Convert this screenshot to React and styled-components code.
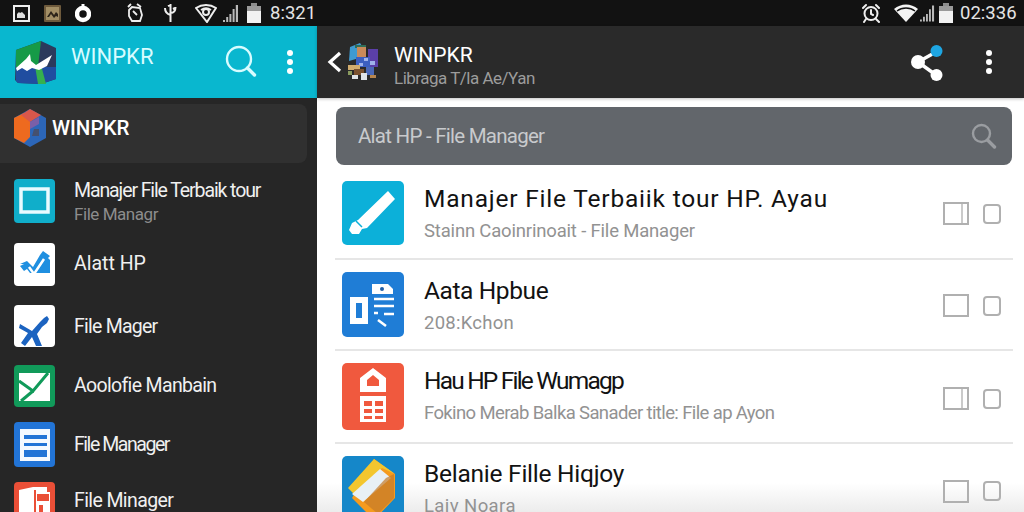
import React from "react";
import styled, { createGlobalStyle } from "styled-components";

const Global = createGlobalStyle`
  html, body { margin: 0; padding: 0; background: #fff; }
  body { font-family: Roboto, "Liberation Sans", sans-serif; }
  #root { width: 1024px; height: 512px; overflow: hidden; }
`;

const Page = styled.div`
  width: 1024px;
  height: 512px;
  overflow: hidden;
  display: flex;
  flex-direction: column;
  background: #fff;
`;

const StatusBar = styled.div`
  height: 26px;
  flex: none;
  background: #121212;
  display: flex;
  align-items: center;
  color: #e4e4e4;
`;
const StatusIcon = styled.svg`
  flex: none;
  display: block;
  margin-left: ${(p) => p.$ml}px;
`;
const Clock = styled.span`
  font-size: ${(p) => p.$size}px;
  line-height: 26px;
  margin-left: ${(p) => p.$ml}px;
  white-space: nowrap;
`;

const Panes = styled.div`
  flex: 1;
  min-height: 0;
  display: flex;
`;

const Sidebar = styled.aside`
  width: 317px;
  flex: none;
  background: #262626;
  display: flex;
  flex-direction: column;
`;
const SideHeader = styled.header`
  height: 72px;
  flex: none;
  background: #09b7cf;
  display: flex;
  align-items: center;
  color: #d8fcff;
`;
const SideBrand = styled.div`
  font-size: 22px;
  line-height: 26px;
  margin: -11px 0 0 15px;
  width: 126px;
`;
const HeaderIcon = styled.svg`
  flex: none;
  display: block;
  margin-left: ${(p) => p.$ml || 0}px;
`;
const BrandCard = styled.div`
  height: 59px;
  width: 307px;
  margin-top: 6px;
  flex: none;
  background: #303030;
  border-radius: 0 8px 8px 0;
  display: flex;
  align-items: center;
  padding: 0 0 12px 14px;
  box-sizing: border-box;
  gap: 6px;
  font-size: 20.5px;
  font-weight: 500;
  color: #fff;
`;
const SideList = styled.div`
  display: grid;
  grid-template-rows: 64px 62px 60px 57px 60px 60px;
  margin-top: 16px;
`;
const SideRow = styled.div`
  display: flex;
  align-items: flex-start;
  padding-left: 14px;
  gap: 19px;
`;
const SideIcon = styled.svg`
  flex: none;
  display: block;
  border-radius: 4px;
`;
const SideText = styled.div`
  padding-top: ${(p) => p.$pt}px;
  white-space: nowrap;
`;
const SideTitle = styled.div`
  font-size: 19.5px;
  line-height: 24px;
  letter-spacing: ${(p) => p.$track}px;
  color: #f0f0f0;
`;
const SideSub = styled.div`
  font-size: 17px;
  line-height: 22px;
  letter-spacing: -0.45px;
  color: #8d8d8d;
`;

const Main = styled.main`
  flex: 1;
  min-width: 0;
  display: flex;
  flex-direction: column;
  background: linear-gradient(#fff 94%, #ececec 100%);
`;
const MainHeader = styled.header`
  height: 72px;
  flex: none;
  background: #2a2a2a;
  display: flex;
  align-items: center;
  color: #fff;
  box-shadow: 0 1px 3px rgba(0, 0, 0, 0.25);
`;
const Back = styled.div`
  position: relative;
  width: 65px;
  height: 72px;
  flex: none;
`;
const BackChevron = styled.svg`
  position: absolute;
  left: 10px;
  top: 25px;
`;
const Avatar = styled.svg`
  position: absolute;
  left: 27px;
  top: 15px;
`;
const HeaderText = styled.div`
  margin: 8px 0 0 12px;
  width: 516px;
  white-space: nowrap;
`;
const HeaderTitle = styled.div`
  font-size: 21px;
  line-height: 23px;
  color: #fff;
`;
const HeaderSub = styled.div`
  font-size: 17px;
  line-height: 22px;
  letter-spacing: -0.5px;
  color: #9c9c9c;
`;
const SearchBar = styled.div`
  height: 58px;
  width: 676px;
  margin: 9px 0 0 19px;
  flex: none;
  background: #62666b;
  border-radius: 8px;
  box-sizing: border-box;
  padding: 0 15px 0 22px;
  display: flex;
  align-items: center;
  justify-content: space-between;
  font-size: 20.5px;
  letter-spacing: -0.75px;
  color: #c8cacd;
`;
const List = styled.div`
  display: grid;
  grid-template-rows: 93px 91px 93px 88px;
  margin: 2px 11px 0 18px;
`;
const Row = styled.div`
  display: flex;
  align-items: center;
  padding-left: 7px;
  box-sizing: border-box;
  border-bottom: ${(p) => (p.$last ? "none" : "2px solid #e6e6e6")};
`;
const RowIcon = styled.svg`
  flex: none;
  display: block;
  border-radius: 5px;
`;
const RowText = styled.div`
  flex: 1;
  min-width: 0;
  margin-left: 20px;
  padding-bottom: ${(p) => p.$lift}px;
  white-space: nowrap;
`;
const RowTitle = styled.div`
  font-size: 24.5px;
  line-height: 31px;
  letter-spacing: ${(p) => p.$track}px;
  color: #121212;
`;
const RowSub = styled.div`
  margin-top: 5px;
  font-size: 18.5px;
  line-height: 24px;
  letter-spacing: ${(p) => p.$track}px;
  color: #929292;
`;
const Controls = styled.div`
  display: flex;
  align-items: center;
  flex: none;
  padding-top: ${(p) => p.$drop}px;
`;
const Toggle = styled.div`
  width: 26px;
  height: 23px;
  box-sizing: border-box;
  border: 2px solid #b0b0b0;
  flex: none;
  position: relative;
  &::after {
    content: "";
    display: ${(p) => (p.$split ? "block" : "none")};
    position: absolute;
    right: 4px;
    top: 0;
    bottom: 0;
    width: 2px;
    background: #cacaca;
  }
`;
const Check = styled.div`
  width: 18px;
  height: 20px;
  margin: 0 12px 0 14px;
  box-sizing: border-box;
  border: 2px solid #b0b0b0;
  border-radius: 4px;
  flex: none;
`;

const Dots = ({ ml, color = "#fff" }) => (
  <HeaderIcon $ml={ml} width="8" height="28" viewBox="0 0 8 28">
    <circle cx="4" cy="5" r="3" fill={color} />
    <circle cx="4" cy="14" r="3" fill={color} />
    <circle cx="4" cy="23" r="3" fill={color} />
  </HeaderIcon>
);

const Signal = ({ ml, w }) => (
  <StatusIcon $ml={ml} width={w} height="20" viewBox="0 0 16 20">
    <path d="M0 19h2v-2H0zM3.2 19h2v-5h-2zM6.4 19h2v-8h-2zM9.6 19h2V6h-2zM12.8 19H15V2h-2.2z" fill="#b9b9b9" />
  </StatusIcon>
);

const Battery = ({ ml }) => (
  <StatusIcon $ml={ml} width="14" height="20" viewBox="0 0 14 20">
    <path d="M4 0h6v3H4z" fill="#8c8c8c" />
    <path d="M0 3h14v17H0z" fill="#9a9a9a" />
    <path d="M0 8h14v12H0z" fill="#f2f2f2" />
  </StatusIcon>
);

const Alarm = ({ ml }) => (
  <StatusIcon $ml={ml} width="20" height="20" viewBox="0 0 20 20" fill="none" stroke="#eee" strokeWidth="2">
    <circle cx="10" cy="10.5" r="6.500" />
    <path d="M2 5l3-3M15 2l3 3M5 16l-2 3M15 16l3 3M10 7v4l2 1" strokeLinecap="round" />
  </StatusIcon>
);

const rows = [
  { t: "Manajer File Terbaiik tour HP. Ayau", tt: 0.8, s: "Stainn Caoinrinoait - File Manager", st: -0.18, drop: 2, lift: 0, split: true, icon: (
    <RowIcon width="62" height="64" viewBox="0 0 62 64">
      <rect width="62" height="64" fill="#0cb0d9" />
      <path d="M46 10l7 8-28 29-5 1-3 5-7 0-3-4 3-7 6-3z" fill="#fff" />
      <path d="M14 40l6 6" stroke="#0cb0d9" strokeWidth="1.5" />
    </RowIcon>
  ) },
  { t: "Aata Hpbue", tt: -0.4, s: "208:Kchon", st: 0.25, drop: 2, lift: 0, icon: (
    <RowIcon width="62" height="65" viewBox="0 0 62 65">
      <rect width="62" height="65" fill="#1f7dd6" />
      <path d="M8 25h18v27H8zM14 31v15h6V31z" fill="#fff" fillRule="evenodd" />
      <path d="M30 12h16l5 5v5H30z" fill="#fff" />
      <circle cx="40" cy="17" r="2" fill="#1f5fa8" />
      <path d="M32 27h20M32 34h20M32 41h4M36 48l8 6M42 42h10" stroke="#fff" strokeWidth="2.6" fill="none" />
    </RowIcon>
  ) },
  { t: "Hau HP File Wumagp", tt: -1.8, s: "Fokino Merab Balka Sanader title: File ap Ayon", st: -0.62, drop: 4, lift: 3, split: true, icon: (
    <RowIcon width="62" height="67" viewBox="0 0 62 67">
      <rect width="62" height="67" fill="#f0593e" />
      <path d="M31 5l13 10v14H18V15zM25 17v6h12v-6l-6-5z" fill="#fff" fillRule="evenodd" />
      <path d="M18 33h26v26H18zM22 38v5h8v-5zM33 38v5h8v-5zM22 46v4h8v-4zM33 46v4h8v-4zM22 53v3h8v-3zM33 53v3h8v-3z" fill="#fff" fillRule="evenodd" />
    </RowIcon>
  ) },
  { t: "Belanie Fille Hiqjoy", tt: -0.25, s: "Laiv Noara", st: 0.4, drop: 6, lift: 0, last: true, icon: (
    <RowIcon width="62" height="64" viewBox="0 0 62 64">
      <rect width="62" height="64" fill="#1587c9" />
      <path d="M32 3l21 15v24L32 64 10 42z" fill="#f59b1f" />
      <path d="M32 3L6 32l6 6L40 12l13 6z" fill="#f3c62e" />
      <path d="M38 13l11 9-28 24-11-8z" fill="#e8f0f5" />
      <path d="M44 22L52 18v24L36 58 22 46z" fill="#c47a2a" opacity=".7" />
    </RowIcon>
  ) },
];

const sideRows = [
  { t: "Manajer File Terbaik tour", tt: -1.1, s: "File Managr", pt: 0, h: 44, icon: (
    <>
      <rect width="41" height="44" fill="#10aeca" />
      <rect x="7" y="10" width="27" height="23" fill="none" stroke="#e9fbff" strokeWidth="3.5" />
    </>
  ) },
  { t: "Alatt HP", tt: 0, pt: 9, h: 43, icon: (
    <>
      <rect width="41" height="43" fill="#fff" />
      <path d="M6 21l7-3 6 6 7-12 3-4 7 5-2 2 2 2v13H16l-3-4-3 2-4-5 4-2z" fill="#1f8fe0" />
      <path d="M15 24l5 7 10-15" fill="none" stroke="#fff" strokeWidth="2.500" />
    </>
  ) },
  { t: "File Mager", tt: -0.75, pt: 10, h: 42, icon: (
    <>
      <rect width="41" height="42" fill="#fff" />
      <path d="M6 19l12 7 8-9 4-4 3-2 2 3-2 4-5 4-5 7 5 12h-6l-4-9-7 9-4-3 7-10-9-5z" fill="#1b63c0" />
    </>
  ) },
  { t: "Aoolofie Manbain", tt: -0.65, pt: 9, h: 42, icon: (
    <>
      <rect width="41" height="42" fill="#119a5a" />
      <rect x="5" y="8" width="31" height="28" fill="#fff" />
      <path d="M5 16l14 10L34 8" fill="none" stroke="#119a5a" strokeWidth="3" />
      <path d="M7 36l12-10" fill="none" stroke="#119a5a" strokeWidth="3" />
    </>
  ) },
  { t: "File Manager", tt: -1.45, pt: 11, h: 45, icon: (
    <>
      <rect width="41" height="45" fill="#2274d6" />
      <rect x="6" y="7" width="30" height="32" fill="#f4f9ff" />
      <path d="M10 13h23v4H10zM10 21h23v3H10zM10 28h23v7H10z" fill="#2274d6" />
    </>
  ) },
  { t: "File Minager", tt: -0.6, pt: 7, h: 44, icon: (
    <>
      <rect width="41" height="44" fill="#ea4f37" />
      <path d="M5 8l14-3h14v5h3v34H5z" fill="#fff" />
      <path d="M21 8v36M24 13h10v5H24zM26 24h2v20h-2z" stroke="#ea4f37" strokeWidth="2" fill="#ea4f37" />
    </>
  ) },
];

export default function App() {
  return (
    <Page>
      <Global />
      <StatusBar>
        <StatusIcon $ml={13} width="17" height="17" viewBox="0 0 17 17">
          <rect x="1" y="1" width="15" height="15" fill="none" stroke="#eee" strokeWidth="2" />
          <path d="M4 13V9l2-2 1 1 2-1 3 3v3z" fill="#ddd" />
        </StatusIcon>
        <StatusIcon $ml={14} width="17" height="17" viewBox="0 0 17 17">
          <rect width="17" height="17" rx="1" fill="#6e5a3c" />
          <rect x="2" y="2" width="13" height="13" fill="#a38f66" />
          <path d="M3 12l4-6 3 4 2-3 2 2v3l-2-1-2 2-3-4-2 3z" fill="#2c241a" />
        </StatusIcon>
        <StatusIcon $ml={14} width="16" height="20" viewBox="0 0 16 20">
          <path d="M6.500 1h3v4h-3z" fill="#fff" />
          <circle cx="8" cy="11" r="6" fill="none" stroke="#fff" strokeWidth="4.500" />
        </StatusIcon>
        <StatusIcon $ml={35} width="18" height="20" viewBox="0 0 18 20" fill="none" stroke="#eee" strokeWidth="1.800">
          <path d="M3 7l3-3 8 1 2 7-2 6H6L3 13z" />
          <path d="M2 4l3-3M11 1l4 3M7 8l4 4" />
        </StatusIcon>
        <StatusIcon $ml={19} width="15" height="20" viewBox="0 0 15 20" fill="none" stroke="#eee" strokeWidth="2">
          <path d="M7.500 1v18M7.500 12C4 11 2 9 2 5M7.500 10c3 0 5-2 5-6M5 3l2-1M10 6l2-1" />
        </StatusIcon>
        <StatusIcon $ml={17} width="22" height="20" viewBox="0 0 22 20" fill="none" stroke="#eee" strokeWidth="2">
          <path d="M1 5c6-4 14-4 20 0l-9 14z" />
          <circle cx="11" cy="9" r="3" />
          <path d="M6 7c3-2 7-2 10 0" />
        </StatusIcon>
        <Signal ml={6} w={16} />
        <Battery ml={8} />
        <Clock $ml={9} $size={18.5}>8:321</Clock>
        <Alarm ml={545} />
        <StatusIcon $ml={13} width="24" height="18" viewBox="0 0 24 18">
          <path d="M0 5c7-6 17-6 24 0L12 18z" fill="#f4f4f4" />
          <path d="M3 7c5-4 13-4 18 0" stroke="#121212" strokeWidth="1.300" fill="none" />
        </StatusIcon>
        <Signal ml={2} w={15} />
        <Battery ml={4} />
        <Clock $ml={7} $size={18.5}>02:336</Clock>
      </StatusBar>

      <Panes>
        <Sidebar>
          <SideHeader>
            <HeaderIcon $ml={15} width="41" height="43" viewBox="0 0 41 43">
              <path d="M1 9l25-9 15 7v31l-15 5-23-1-3-3z" fill="#2b3a5c" />
              <path d="M1 9L26 0l-3 26L1 26z" fill="#169a47" />
              <path d="M1 26h40v12l-15 5-23-1-2-2z" fill="#204da0" />
              <path d="M20 25l6-1 5 19h-8z" fill="#35b04e" />
              <path d="M1 27l10-9 4-5 1 7 5 4 16-10-5 11-8 4-7-2-5 3-5-3-5 3z" fill="#fff" />
            </HeaderIcon>
            <SideBrand>WINPKR</SideBrand>
            <HeaderIcon $ml={27} width="36" height="36" viewBox="0 0 36 36" fill="none" stroke="#d8fcff" strokeWidth="2.400">
              <circle cx="15" cy="15" r="12" />
              <path d="M23.500 24l7 7" strokeLinecap="round" strokeWidth="3.400" />
            </HeaderIcon>
            <Dots ml={26} />
          </SideHeader>
          <BrandCard>
            <svg width="32" height="38" viewBox="0 0 32 38">
              <path d="M16 0l16 9v20l-16 9L0 29V9z" fill="#2c66b8" />
              <path d="M0 9l10-5 6 8v16l-6 6-10-5z" fill="#ee6a1f" />
              <path d="M16 0l11 6-11 7-9-7z" fill="#d8574b" />
              <path d="M16 13l9-5v7l-9 5z" fill="#7a5fa8" />
              <path d="M20 20h5v7h-7z" fill="#45506f" />
            </svg>
            <span>WINPKR</span>
          </BrandCard>
          <SideList>
            {sideRows.map((r) => (
              <SideRow key={r.t}>
                <SideIcon width="41" height={r.h} viewBox={`0 0 41 ${r.h}`}>{r.icon}</SideIcon>
                <SideText $pt={r.pt}>
                  <SideTitle $track={r.tt}>{r.t}</SideTitle>
                  {r.s && <SideSub>{r.s}</SideSub>}
                </SideText>
              </SideRow>
            ))}
          </SideList>
        </Sidebar>

        <Main>
          <MainHeader>
            <Back>
              <Avatar width="34" height="42" viewBox="0 0 34 42">
                <path d="M6 6l10-4 4 6-8 10-7 2z" fill="#3f9ad0" />
                <path d="M24 8h10v18H24z" fill="#5b3fa8" />
                <path d="M11 4h11v3H11z" fill="#2f6d58" />
                <path d="M13 6h9v10h-9z" fill="#c98a5a" />
                <path d="M12 16h14v10H12z" fill="#3c5fc0" />
                <path d="M20 17h4v3h-4zM26 20h5v4h-5zM15 22h4v3h-4z" fill="#9fb2ea" />
                <path d="M4 24h12v5H4z" fill="#d2ad6f" />
                <path d="M10 28h10v6H10z" fill="#7a5230" />
                <path d="M22 26h8v8h-8z" fill="#4a68b8" />
                <path d="M8 34h6v4H8zM17 32h6v7h-6z" fill="#dfe4e8" />
                <path d="M26 34h6v3h-6z" fill="#b8864e" />
                <path d="M4 30h4v4H4z" fill="#8a9b5f" />
              </Avatar>
              <BackChevron width="15" height="22" viewBox="0 0 15 22" fill="none" stroke="#fff" strokeWidth="3.200">
                <path d="M13 2L3 11l10 9" />
              </BackChevron>
            </Back>
            <HeaderText>
              <HeaderTitle>WINPKR</HeaderTitle>
              <HeaderSub>Libraga T/la Ae/Yan</HeaderSub>
            </HeaderText>
            <HeaderIcon width="36" height="40" viewBox="0 0 36 40">
              <path d="M8 20L26 10M8 20l18 13" stroke="#fff" strokeWidth="3.400" />
              <circle cx="8" cy="20" r="7" fill="#fff" />
              <circle cx="26.500" cy="9" r="6" fill="#1ea6e2" />
              <circle cx="26.500" cy="33" r="6" fill="#fff" />
            </HeaderIcon>
            <Dots ml={39} />
          </MainHeader>
          <SearchBar>
            <span>Alat HP - File Manager</span>
            <svg width="26" height="26" viewBox="0 0 26 26" fill="none" stroke="#9a9da1" strokeWidth="2.400">
              <circle cx="10.500" cy="10.500" r="8.500" />
              <path d="M16.500 17l7 7" strokeWidth="3.400" strokeLinecap="round" />
            </svg>
          </SearchBar>
          <List>
            {rows.map((r) => (
              <Row key={r.t} $last={r.last}>
                {r.icon}
                <RowText $lift={r.lift}>
                  <RowTitle $track={r.tt}>{r.t}</RowTitle>
                  <RowSub $track={r.st}>{r.s}</RowSub>
                </RowText>
                <Controls $drop={r.drop}>
                  <Toggle $split={r.split} />
                  <Check />
                </Controls>
              </Row>
            ))}
          </List>
        </Main>
      </Panes>
    </Page>
  );
}
